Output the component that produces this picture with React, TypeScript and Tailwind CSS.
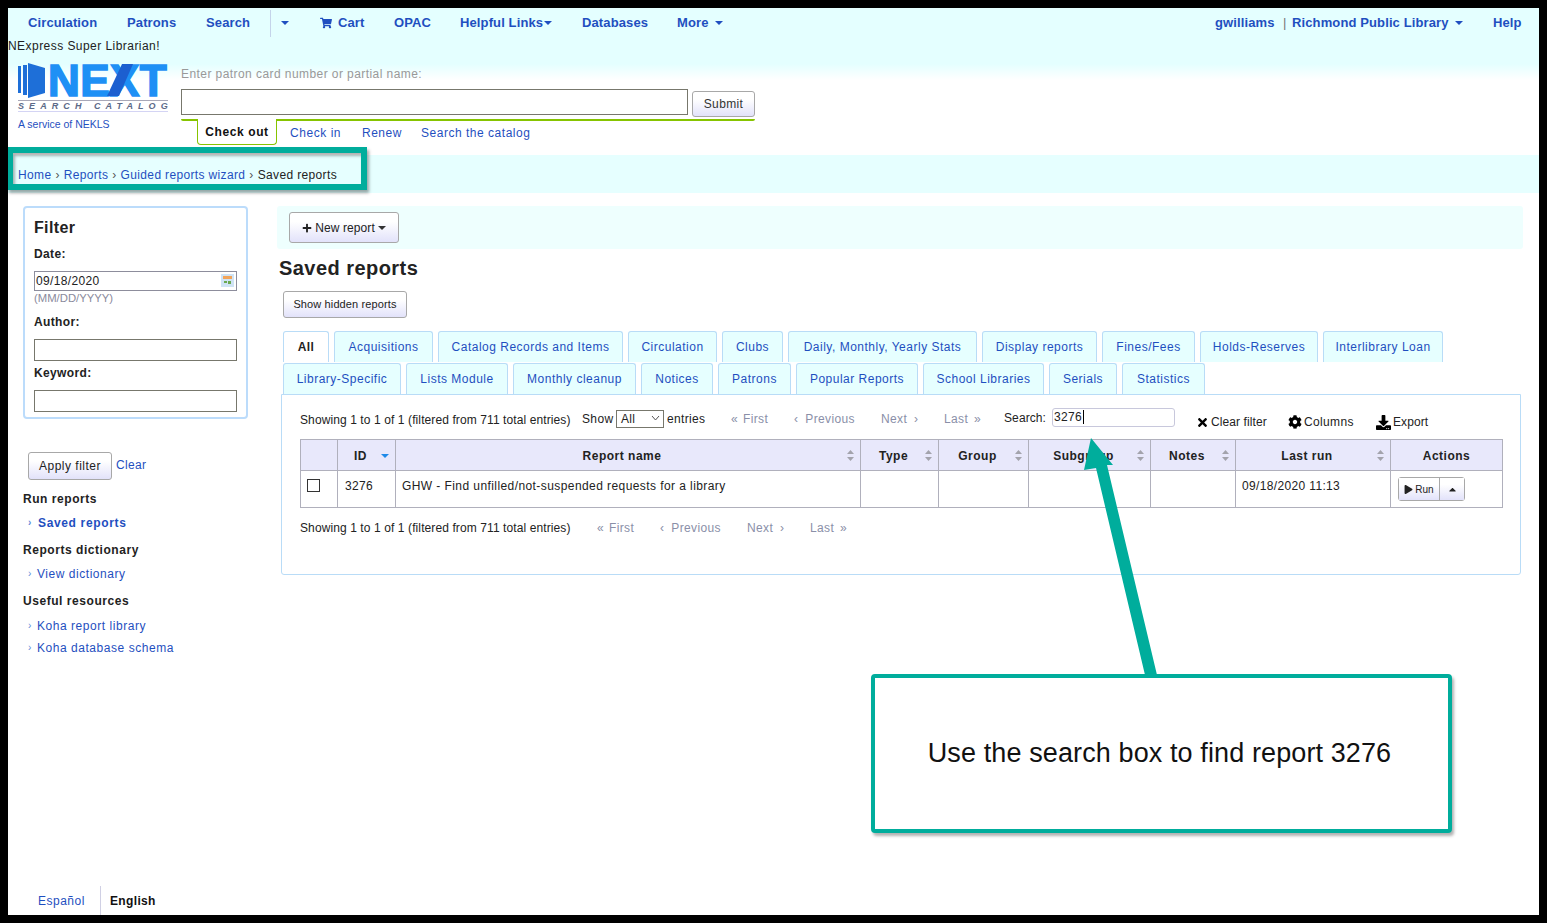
import React from "react";
import { FaShoppingCart, FaPlus, FaCog, FaTimes, FaDownload, FaPlay, FaCaretUp } from "react-icons/fa";

const Caret = ({ className = "" }: { className?: string }) => (
  <svg width="8" height="4" viewBox="0 0 8 4" className={className}><path d="M0 0h8L4 4z" fill="currentColor" /></svg>
);

const Sort = () => (
  <svg width="7" height="11" viewBox="0 0 7 11" className="absolute right-[6px] top-[10px]"><path d="M3.5 0L7 4H0zM3.5 11L0 7h7z" fill="#a3a3ac" /></svg>
);

const tabsOne: [string, string][] = [
  ["Acquisitions", "w-[99px]"],
  ["Catalog Records and Items", "w-[185px]"],
  ["Circulation", "w-[89px]"],
  ["Clubs", "w-[61px]"],
  ["Daily, Monthly, Yearly Stats", "w-[189px]"],
  ["Display reports", "w-[115px]"],
  ["Fines/Fees", "w-[93px]"],
  ["Holds-Reserves", "w-[118px]"],
  ["Interlibrary Loan", "w-[120px]"],
];
const tabsTwo: [string, string][] = [
  ["Library-Specific", "w-[118px]"],
  ["Lists Module", "w-[102px]"],
  ["Monthly cleanup", "w-[123px]"],
  ["Notices", "w-[72px]"],
  ["Patrons", "w-[73px]"],
  ["Popular Reports", "w-[122px]"],
  ["School Libraries", "w-[121px]"],
  ["Serials", "w-[68px]"],
  ["Statistics", "w-[83px]"],
];

const Tab = ({ label, w, extra = "" }: { label: string; w: string; extra?: string }) => (
  <a className={`${w} ${extra} flex h-full items-center justify-center rounded-t-[3px] border border-b-0 border-[#b9dcf7] bg-[#e6ffff] tracking-[0.5px] text-[#1f4fc0]`}>{label}</a>
);

const btn = "rounded-[3px] border border-[#a8a8a8] bg-[linear-gradient(#ffffff_30%,#e2e2fa)] text-[#222]";

const th = "relative border border-[#b0b0bc] bg-[#e8e8fb] pt-[2px] text-center font-bold tracking-[0.5px] text-[#222]";
const td = "border border-[#b0b0bc] px-[6px] pt-[6px] align-top";

const Num = ({ w, children, className = "" }: { w: string; children: React.ReactNode; className?: string }) => (
  <span className={`${w} shrink-0 whitespace-nowrap ${className}`}>{children}</span>
);

const SideHead = ({ children, mt }: { children: React.ReactNode; mt: string }) => (
  <div className={`${mt} h-[16px] leading-[16px] font-bold tracking-[0.55px] text-[#222]`}>{children}</div>
);
const SideLink = ({ children, mt, bold, ml }: { children: React.ReactNode; mt: string; bold?: boolean; ml: string }) => (
  <div className={`${mt} flex h-[16px] items-center leading-[16px] text-[#1f4fc0] ${bold ? "font-bold tracking-[0.65px]" : "tracking-[0.55px]"}`}>
    <span className="ml-[5px] text-[10px] text-[#5d8ad8]">›</span>
    <span className={ml}>{children}</span>
  </div>
);

const Pager = ({ widths }: { widths: string[] }) => (
  <>
    <Num w={widths[0]} className="flex gap-[5px] text-[#8a8fa8]"><span>«</span><span>First</span></Num>
    <Num w={widths[1]} className="flex gap-[7px] text-[#8a8fa8]"><span>‹</span><span>Previous</span></Num>
    <Num w={widths[2]} className="flex gap-[7px] text-[#8a8fa8]"><span>Next</span><span>›</span></Num>
    <Num w={widths[3]} className="flex gap-[6px] text-[#8a8fa8]"><span>Last</span><span>»</span></Num>
  </>
);

export default function App() {
  return (
    <div className="h-[923px] w-[1547px] overflow-hidden bg-black p-2 font-['Liberation_Sans',Arial,sans-serif] text-[12px] tracking-[0.35px] text-[#222]">
      <div className="relative flex h-[907px] w-[1531px] flex-col overflow-hidden bg-white">
        {/* header */}
        <div className="h-[147px] shrink-0 bg-[linear-gradient(#e4ffff_0,#e4ffff_56px,#ffffff_72px)]">
          <nav className="flex h-[30px] items-center pl-[20px] text-[13px] font-bold tracking-[0.12px] text-[#1f4fc0]">
            <Num w="w-[99px]">Circulation</Num>
            <Num w="w-[79px]">Patrons</Num>
            <Num w="w-[64px]">Search</Num>
            <span className="h-[27px] w-px shrink-0 bg-[#c4d4ea]" />
            <span className="flex w-[49px] shrink-0 pl-[10px]"><Caret /></span>
            <Num w="w-[74px]" className="flex items-center gap-[6px]"><FaShoppingCart size={12} />Cart</Num>
            <Num w="w-[66px]">OPAC</Num>
            <Num w="w-[122px]" className="flex items-center gap-[1px]">Helpful Links<Caret /></Num>
            <Num w="w-[95px]">Databases</Num>
            <Num w="w-[538px]" className="flex items-center gap-[6px]">More<Caret /></Num>
            <Num w="w-[68px]">gwilliams</Num>
            <Num w="w-[9px]" className="font-normal text-[#777]">|</Num>
            <Num w="w-[201px]" className="flex items-center gap-[6px]">Richmond Public Library<Caret /></Num>
            <span>Help</span>
          </nav>
          <div className="h-[15px] pt-px leading-[14px] tracking-[0.45px] text-[#222]">NExpress Super Librarian!</div>
          <div className="flex pl-[10px] pt-[10px]">
            <div className="w-[163px] shrink-0">
              <svg width="150" height="50" viewBox="0 0 150 50" className="block overflow-visible">
                <path d="M0 3h3v27H0zM5 2h4v30H5z" fill="#1e6fd8" />
                <path d="M10 0l17 5v25l-17 5z" fill="#1e6fd8" />
                <text x="30" y="33" fontFamily="Liberation Sans" fontWeight="700" fontSize="44" fill="#1e90f5" stroke="#1e90f5" strokeWidth="1.6" textLength="119" lengthAdjust="spacingAndGlyphs">NEXT</text>
                <path d="M104 1h11L101 33H89z" fill="#1c5fd0" />
                <rect x="0" y="37" width="150" height="1" fill="#a8a8b8" />
                <text x="0" y="46" fontFamily="Liberation Sans" fontWeight="700" fontStyle="italic" fontSize="9" fill="#5c6a88" textLength="150">SEARCH  CATALOG</text>
                <rect x="0" y="48" width="150" height="1" fill="#d4d4f4" />
              </svg>
              <div className="mt-[5px] text-[10.5px] leading-[12px] tracking-normal text-[#1f4fc0]">A service of NEKLS</div>
            </div>
            <div className="w-[574px] shrink-0">
              <div className="mt-[4px] h-[14px] leading-[14px] tracking-[0.43px] text-[#999]">Enter patron card number or partial name:</div>
              <div className="mt-[8px] flex items-start gap-[4px]">
                <input className="h-[26px] w-[507px] border border-[#77776c] bg-white" />
                <button className={`${btn} mt-[2px] h-[26px] w-[63px] text-[#333]`}>Submit</button>
              </div>
              <div className="mt-[2px] h-[2px] rounded-b-[2px] bg-[#86c400]" />
              <div className="flex items-center pl-[16px]">
                <div className="-mt-[2px] flex h-[26px] w-[80px] shrink-0 items-center justify-center rounded-b-[4px] border border-t-0 border-[#86c400] bg-white font-bold tracking-[0.6px] text-[#111]">Check out</div>
                <Num w="w-[72px]" className="ml-[13px] tracking-[0.55px] text-[#1f4fc0]">Check in</Num>
                <Num w="w-[59px]" className="tracking-[0.5px] text-[#1f4fc0]">Renew</Num>
                <Num w="w-[120px]" className="tracking-[0.52px] text-[#1f4fc0]">Search the catalog</Num>
              </div>
            </div>
          </div>
        </div>

        {/* breadcrumb */}
        <div className="flex h-[38px] shrink-0 items-center bg-[#e6ffff] pl-[10px] pt-px text-[#1f4fc0]">
          Home<span className="mx-[4px] text-[#555]">›</span>Reports<span className="mx-[4px] text-[#555]">›</span>Guided reports wizard<span className="mx-[4px] text-[#555]">›</span><span className="text-[#222]">Saved reports</span>
        </div>

        {/* body */}
        <div className="flex flex-1 pl-[15px] pt-[13px]">
          <aside className="w-[225px] shrink-0">
            <div className="h-[213px] rounded-[4px] border-2 border-[#bcdcfb] px-[9px] pt-[11px]">
              <div className="h-[18px] text-[16px] leading-[18px] font-bold text-[#222]">Filter</div>
              <div className="mt-[10px] h-[15px] leading-[15px] font-bold">Date:</div>
              <div className="mt-[9px] flex h-[20px] w-[203px] items-center justify-between border border-[#8d8d9c] pb-px pl-[1px] pr-[2px]">
                09/18/2020
                <svg width="13" height="13" viewBox="0 0 13 13"><rect width="13" height="13" fill="#cfe3f5" /><rect x="2" y="2" width="9" height="3" fill="#f2a45a" /><rect x="3" y="7" width="3" height="2" fill="#6aa84f" /><rect x="7" y="7" width="3" height="3" fill="#6aa84f" /></svg>
              </div>
              <div className="h-[14px] text-[11.3px] leading-[14px] tracking-normal text-[#8a8a9c]">(MM/DD/YYYY)</div>
              <div className="mt-[10px] h-[15px] leading-[15px] font-bold">Author:</div>
              <div className="mt-[9px] h-[22px] w-[203px] border border-[#77776c]" />
              <div className="mt-[5px] h-[15px] leading-[15px] font-bold">Keyword:</div>
              <div className="mt-[9px] h-[22px] w-[203px] border border-[#77776c]" />
            </div>
            <div className="mt-[33px] flex items-center pl-[5px]">
              <button className={`${btn} h-[28px] w-[84px] tracking-[0.5px]`}>Apply filter</button>
              <a className="ml-[4px] -mt-[2px] text-[#1f4fc0]">Clear</a>
            </div>
            <SideHead mt="mt-[11px]">Run reports</SideHead>
            <SideLink mt="mt-[8px]" bold ml="ml-[6px]">Saved reports</SideLink>
            <SideHead mt="mt-[11px]">Reports dictionary</SideHead>
            <SideLink mt="mt-[8px]" ml="ml-[5px]">View dictionary</SideLink>
            <SideHead mt="mt-[11px]">Useful resources</SideHead>
            <SideLink mt="mt-[9px]" ml="ml-[5px]">Koha report library</SideLink>
            <SideLink mt="mt-[6px]" ml="ml-[5px]">Koha database schema</SideLink>
          </aside>

          <main className="ml-[29px] w-[1246px] shrink-0">
            <div className="h-[43px] rounded-[3px] bg-[#eefffe] pl-[12px] pt-[6px]">
              <button className={`${btn} flex h-[31px] w-[110px] items-center justify-center gap-[3px] tracking-[0.1px]`}>
                <FaPlus size={10} />New report<Caret className="text-[#333]" />
              </button>
            </div>
            <h1 className="mt-[8px] ml-[2px] h-[22px] text-[20px] leading-[22px] font-bold tracking-[0.45px] text-[#222]">Saved reports</h1>
            <button className={`${btn} mt-[12px] ml-[6px] block h-[27px] w-[124px] text-[11px] tracking-[0.12px]`}>Show hidden reports</button>

            <div className="mt-[13px] ml-[6px] flex h-[31px] gap-[5px]">
              <a className="flex h-full w-[46px] items-center justify-center rounded-t-[3px] border border-b-0 border-[#b9dcf7] bg-white pb-[1px] font-bold text-[#222]">All</a>
              {tabsOne.map(([l, w]) => <Tab key={l} label={l} w={w} extra="pb-[1px]" />)}
            </div>
            <div className="relative z-10 mt-px ml-[6px] flex h-[31px] gap-[5px]">
              {tabsTwo.map(([l, w]) => <Tab key={l} label={l} w={w} />)}
            </div>
            <section className="ml-[4px] h-[181px] w-[1240px] rounded-b-[3px] border border-[#b9dcf7] pl-[18px]">
              <div className="flex h-[44px] items-center pb-px">
                <Num w="w-[282px]" className="mt-[7px] tracking-[0.1px]">Showing 1 to 1 of 1 (filtered from 711 total entries)</Num>
                <Num w="w-[34px]" className="mt-[4px]">Show</Num>
                <span className="mt-[4px] flex h-[18px] w-[48px] shrink-0 items-center justify-between border border-[#77776c] pl-[4px] pr-[3px]">All
                  <svg width="9" height="5" viewBox="0 0 9 5"><path d="M1 0l3.5 4L8 0" fill="none" stroke="#555" /></svg>
                </span>
                <Num w="w-[64px]" className="mt-[4px] ml-[3px]">entries</Num>
                <span className="mt-[4px] flex">
                  <Pager widths={["w-[63px]", "w-[87px]", "w-[63px]", "w-[60px]"]} />
                </span>
                <Num w="w-[48px]" className="mt-[2px] tracking-[0.1px]">Search:</Num>
                <span className="mt-[1px] flex h-[19px] w-[123px] shrink-0 items-center rounded-[3px] border border-[#c8c8dc] pl-[1px]">3276<span className="ml-px h-[14px] w-px bg-black" /></span>
                <Num w="w-[92px]" className="ml-[21px] mt-[11px] flex items-center gap-[2px] tracking-[0.1px]"><FaTimes size={13} className="text-black" />Clear filter</Num>
                <Num w="w-[88px]" className="mt-[11px] flex items-center gap-[2px]"><FaCog size={14} className="text-black" />Columns</Num>
                <Num w="w-[60px]" className="mt-[11px] flex items-center gap-[2px] tracking-[0.1px]"><FaDownload size={15} className="text-black" />Export</Num>
              </div>
              <table className="w-[1202px] table-fixed border-collapse text-[12px]">
                <colgroup>
                  <col className="w-[37px]" /><col className="w-[58px]" /><col className="w-[465px]" /><col className="w-[78px]" /><col className="w-[90px]" /><col className="w-[122px]" /><col className="w-[85px]" /><col className="w-[155px]" /><col className="w-[112px]" />
                </colgroup>
                <thead>
                  <tr className="h-[31px]">
                    <th className={th} />
                    <th className={`${th} pr-[12px]`}>ID<span className="absolute right-[6px] top-[14px] text-[#1e8ae8]"><Caret /></span></th>
                    {["Report name", "Type", "Group", "Subgroup", "Notes", "Last run"].map((h) => (
                      <th key={h} className={`${th} pr-[12px]`}>{h}<Sort /></th>
                    ))}
                    <th className={th}>Actions</th>
                  </tr>
                </thead>
                <tbody>
                  <tr className="h-[37px]">
                    <td className={`${td} pt-[5px]`}><span className="mt-[2px] block h-[13px] w-[13px] border border-[#333] bg-white" /></td>
                    <td className={`${td} pl-[7px]`}>3276</td>
                    <td className={`${td} pt-[5px] tracking-[0.42px]`}>GHW - Find unfilled/not-suspended requests for a library</td>
                    <td className={td} /><td className={td} /><td className={td} /><td className={td} />
                    <td className={`${td} pt-[5px]`}>09/18/2020 11:13</td>
                    <td className={`${td} pt-[5px]`}>
                      <div className="ml-[1px] flex h-[24px] w-[67px] rounded-[3px] border border-[#a8a8a8] text-[10px] tracking-normal">
                        <span className="flex w-[41px] items-center justify-center gap-[2px] border-r border-[#a8a8a8] bg-[linear-gradient(#ffffff_30%,#e2e2fa)]"><FaPlay size={9} className="text-[#222]" />Run</span>
                        <span className="flex flex-1 items-center justify-center bg-[linear-gradient(#ffffff_30%,#e2e2fa)]"><FaCaretUp size={11} className="text-[#222]" /></span>
                      </div>
                    </td>
                  </tr>
                </tbody>
              </table>
              <div className="mt-[11px] flex">
                <Num w="w-[297px]" className="tracking-[0.1px]">Showing 1 to 1 of 1 (filtered from 711 total entries)</Num>
                <Pager widths={["w-[63px]", "w-[87px]", "w-[63px]", "w-[60px]"]} />
              </div>
            </section>
          </main>
        </div>

        {/* footer */}
        <div className="flex h-[29px] shrink-0 items-center pl-[30px]">
          <span className="w-[62px] tracking-[0.5px] text-[#1f4fc0]">Español</span>
          <span className="h-[29px] w-px bg-[#d0d0e4]" />
          <span className="ml-[9px] font-bold text-[#111]">English</span>
        </div>

        {/* annotations */}
        <div className="absolute left-[-1px] top-[139px] h-[43px] w-[360px] border-[6px] border-[#00ad9c] shadow-[2px_3px_3px_rgba(0,0,0,0.35),inset_2px_3px_3px_rgba(0,0,0,0.3)]" />
        <svg width="100" height="245" viewBox="0 0 100 245" className="absolute left-[1070px] top-[428px]">
          <path d="M13 2L6 34l12-2 49 207h12L29 29l6 0z" fill="#00ad9c" />
        </svg>
        <div className="absolute left-[863px] top-[666px] flex h-[159px] w-[581px] items-center justify-center rounded-[4px] border-[4px] border-[#00ad9c] bg-white pr-[4px] text-[27px] tracking-[0.11px] text-[#111] shadow-[2px_3px_3px_rgba(0,0,0,0.3)]">
          Use the search box to find report 3276
        </div>
      </div>
    </div>
  );
}
